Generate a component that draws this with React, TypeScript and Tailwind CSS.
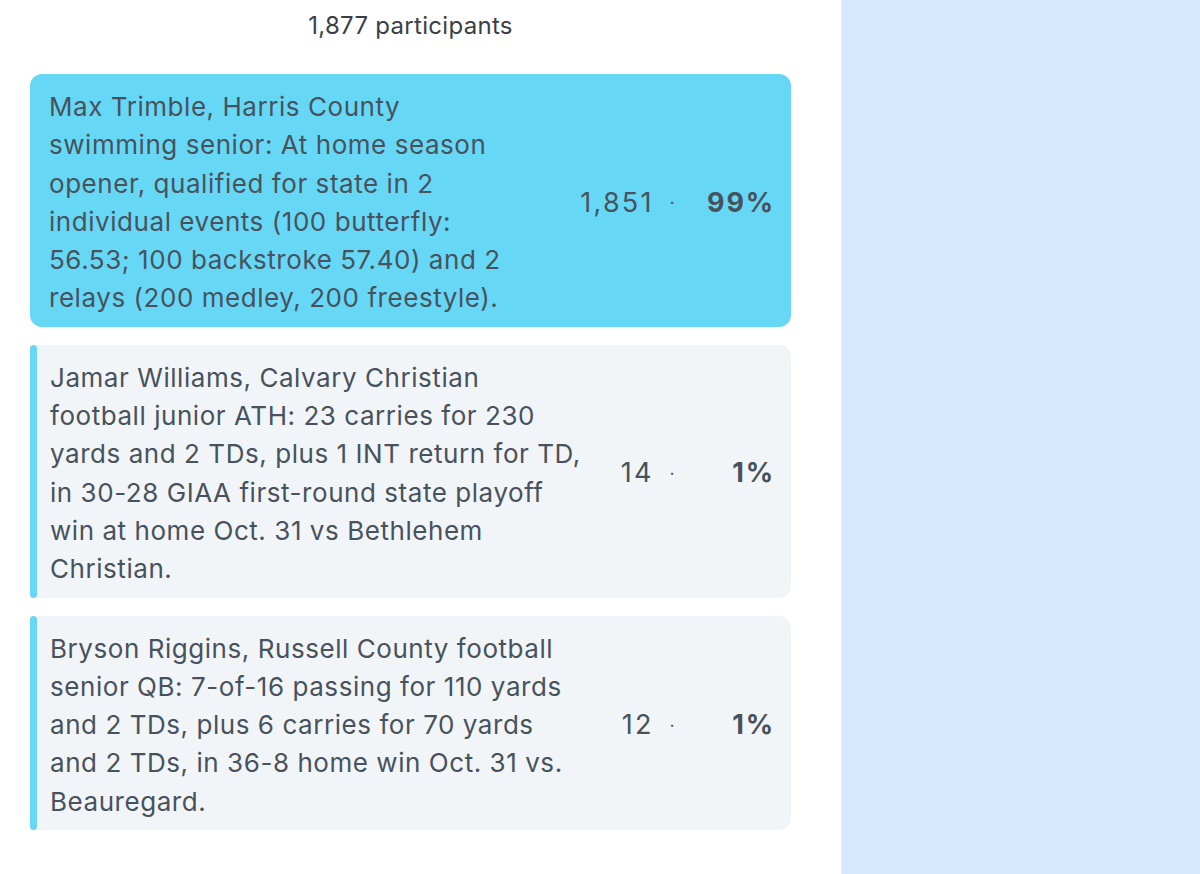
type Choice = {
  id: number;
  lines: string[];
  votes: string;
  percent: string;
  leading?: boolean;
};

const choices: Choice[] = [
  {
    id: 1,
    lines: [
      'Max Trimble, Harris County',
      'swimming senior: At home season',
      'opener, qualified for state in 2',
      'individual events (100 butterfly:',
      '56.53; 100 backstroke 57.40) and 2',
      'relays (200 medley, 200 freestyle).',
    ],
    votes: '1,851',
    percent: '99%',
    leading: true,
  },
  {
    id: 2,
    lines: [
      'Jamar Williams, Calvary Christian',
      'football junior ATH: 23 carries for 230',
      'yards and 2 TDs, plus 1 INT return for TD,',
      'in 30-28 GIAA first-round state playoff',
      'win at home Oct. 31 vs Bethlehem',
      'Christian.',
    ],
    votes: '14',
    percent: '1%',
  },
  {
    id: 3,
    lines: [
      'Bryson Riggins, Russell County football',
      'senior QB: 7-of-16 passing for 110 yards',
      'and 2 TDs, plus 6 carries for 70 yards',
      'and 2 TDs, in 36-8 home win Oct. 31 vs.',
      'Beauregard.',
    ],
    votes: '12',
    percent: '1%',
  },
];

const ChoiceRow = ({ choice }: { choice: Choice }) => {
  const body = (
    <div className="flex flex-1 items-center pt-[14px] pb-[9px] pl-[13px] pr-[16px]">
      <p className="text-[26px] leading-[38.3px] tracking-[0.55px] text-[#48525d]">
        {choice.lines.map((line) => (
          <span key={line} className="block whitespace-nowrap">
            {line}
          </span>
        ))}
      </p>
      <div className="ml-auto flex shrink-0 items-center text-[27px] tracking-[2.2px] text-[#48525d]">
        <span>{choice.votes}</span>
        <span className="ml-[16px] text-[18px]">·</span>
        <span className="w-[98px] text-right font-bold tracking-[1.8px]">{choice.percent}</span>
      </div>
    </div>
  );

  if (choice.leading) {
    return <div className="flex rounded-[12px] bg-[#66d8f5] pl-[6px]">{body}</div>;
  }

  return (
    <div className="flex">
      <div className="w-[7px] rounded-full bg-[#66d8f5]" />
      <div className="flex flex-1 rounded-r-[12px] bg-[#f2f5f7]">{body}</div>
    </div>
  );
};

export default function App() {
  return (
    <div className="flex h-[874px] w-[1200px] bg-white font-['Inter',sans-serif]">
      <div className="w-[841px] shrink-0 pl-[30px] pr-[50px]">
        <div className="pt-[11px] text-center text-[24px] leading-[30px] tracking-[0.3px] text-[#3a3f45]">1,877 participants</div>
        <div className="mt-[33px] flex flex-col gap-[18px]">
          {choices.map((choice) => (
            <ChoiceRow key={choice.id} choice={choice} />
          ))}
        </div>
      </div>
      <div className="flex-1 border-l border-[#e2eefb] bg-[#d5e8fd]" />
    </div>
  );
}
